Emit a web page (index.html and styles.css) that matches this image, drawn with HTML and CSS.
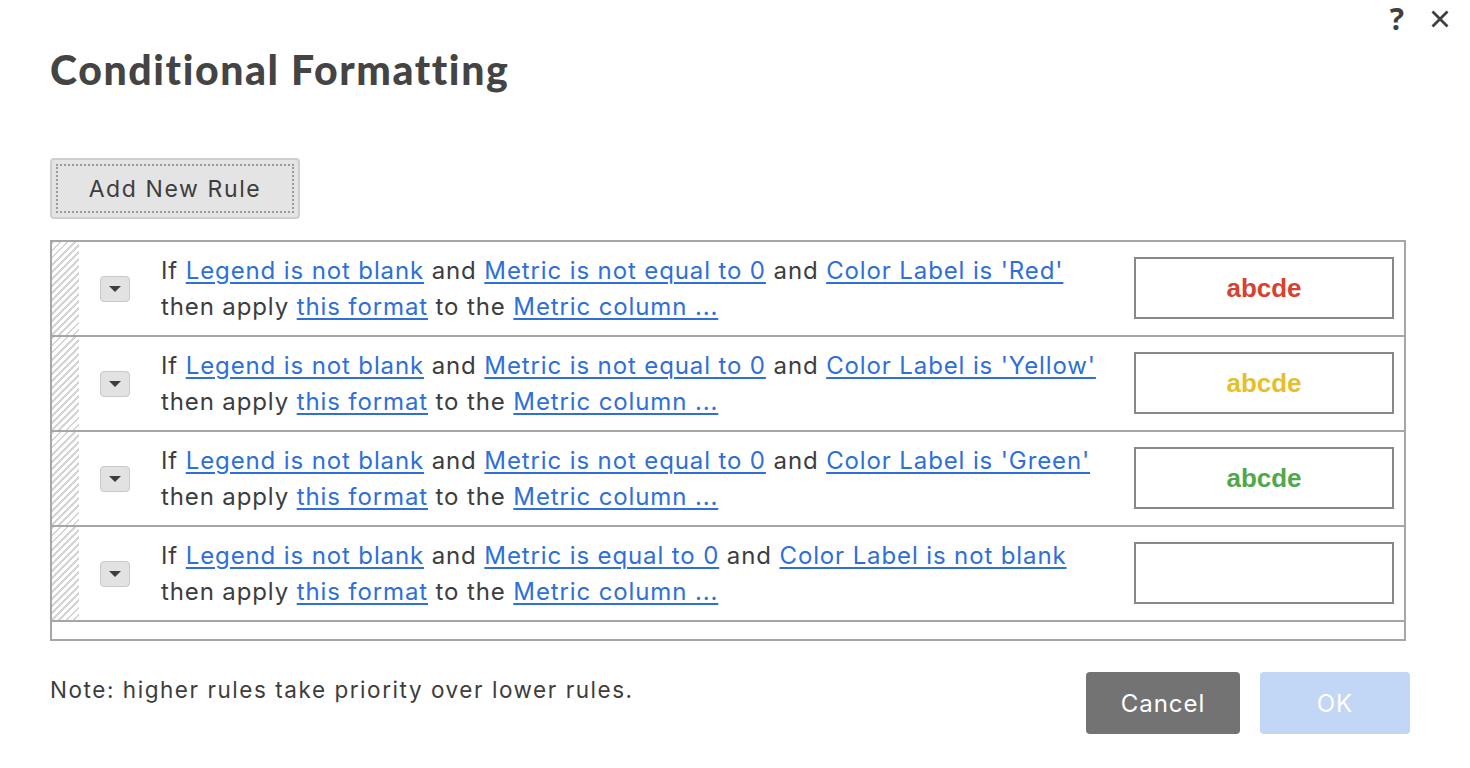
FILE: index.html
```html
<!DOCTYPE html>
<html>
<head>
<meta charset="utf-8">
<link rel="stylesheet" href="styles.css">
</head>
<body>
<div class="dialog">
  <div class="top-icons">
    <span class="help">?</span>
    <svg class="close" width="20" height="20" viewBox="0 0 20 20"><path d="M2.5 2.5 L17.5 17.5 M17.5 2.5 L2.5 17.5" stroke="#3f3f3f" stroke-width="2.8" stroke-linecap="butt"/></svg>
  </div>
  <h1 class="title">Conditional Formatting</h1>
  <button class="add-btn"><span class="focus">Add New Rule</span></button>
  <div class="rules">
    <div class="rule">
      <div class="hatch"></div>
      <div class="drop"><span class="tri"></span></div>
      <div class="desc">
        <div>If <a>Legend is not blank</a> and <a>Metric is not equal to 0</a> and <a>Color Label is 'Red'</a></div>
        <div>then apply <a>this format</a> to the <a>Metric column ...</a></div>
      </div>
      <div class="preview red">abcde</div>
    </div>
    <div class="rule">
      <div class="hatch"></div>
      <div class="drop"><span class="tri"></span></div>
      <div class="desc">
        <div>If <a>Legend is not blank</a> and <a>Metric is not equal to 0</a> and <a>Color Label is 'Yellow'</a></div>
        <div>then apply <a>this format</a> to the <a>Metric column ...</a></div>
      </div>
      <div class="preview yellow">abcde</div>
    </div>
    <div class="rule">
      <div class="hatch"></div>
      <div class="drop"><span class="tri"></span></div>
      <div class="desc">
        <div>If <a>Legend is not blank</a> and <a>Metric is not equal to 0</a> and <a>Color Label is 'Green'</a></div>
        <div>then apply <a>this format</a> to the <a>Metric column ...</a></div>
      </div>
      <div class="preview green">abcde</div>
    </div>
    <div class="rule">
      <div class="hatch"></div>
      <div class="drop"><span class="tri"></span></div>
      <div class="desc">
        <div>If <a>Legend is not blank</a> and <a>Metric is equal to 0</a> and <a>Color Label is not blank</a></div>
        <div>then apply <a>this format</a> to the <a>Metric column ...</a></div>
      </div>
      <div class="preview"></div>
    </div>
    <div class="filler"></div>
  </div>
  <div class="footer">
    <div class="note">Note: higher rules take priority over lower rules.</div>
    <div class="actions">
      <button class="cancel">Cancel</button>
      <button class="ok">OK</button>
    </div>
  </div>
</div>
</body>
</html>
```
FILE: styles.css
```css
html, body {
  margin: 0;
  padding: 0;
  background: #fff;
}
body {
  font-family: Inter, "Noto Sans", sans-serif;
  color: #3d3d3d;
  width: 1470px;
  height: 768px;
  overflow: hidden;
}
.dialog {
  position: relative;
  padding: 0 60px 0 50px;
}
.top-icons {
  position: absolute;
  top: -1px;
  right: 20px;
  display: flex;
  align-items: center;
  gap: 26px;
}
.help {
  font-family: "Open Sans", sans-serif;
  font-weight: 700;
  font-size: 30px;
  color: #3f3f3f;
  line-height: 40px;
}
.close {
  display: block;
}
.title {
  margin: 0;
  padding-top: 45px;
  font-family: Lato, "Open Sans", sans-serif;
  font-weight: 900;
  font-size: 41px;
  line-height: 50px;
  color: #444;
  letter-spacing: 1.6px;
}
.add-btn {
  margin-top: 63px;
  width: 250px;
  height: 61px;
  padding: 4px;
  border: 2px solid #cfcfcf;
  border-radius: 4px;
  background: #e4e4e4;
  font-family: Inter, sans-serif;
  font-size: 23px;
  letter-spacing: 1.6px;
  color: #3d3d3d;
  display: block;
}
.add-btn .focus {
  display: flex;
  align-items: center;
  justify-content: center;
  height: 100%;
  border: 2px dotted #9a9a9a;
  box-sizing: border-box;
}
.rules {
  margin-top: 21px;
  width: 1356px;
  border: 2px solid #a6a6a6;
  box-sizing: border-box;
}
.rule {
  display: flex;
  align-items: stretch;
  height: 95px;
  border-bottom: 2px solid #a6a6a6;
  box-sizing: border-box;
}
.hatch {
  width: 27px;
  flex: none;
  background: repeating-linear-gradient(135deg, #d4d4d4 0 2px, #fff 2px 5px);
}
.drop {
  flex: none;
  align-self: center;
  margin-left: 21px;
  width: 30px;
  height: 26px;
  box-sizing: border-box;
  border: 1px solid #c9c9c9;
  border-radius: 4px;
  background: #e2e2e2;
  display: flex;
  align-items: center;
  justify-content: center;
}
.tri {
  width: 0;
  height: 0;
  border-left: 6px solid transparent;
  border-right: 6px solid transparent;
  border-top: 6px solid #3d3d3d;
  margin-top: 1px;
}
.desc {
  flex: 1;
  margin-left: 31px;
  align-self: center;
  font-size: 24px;
  letter-spacing: 0.88px;
  line-height: 36px;
  white-space: nowrap;
}
.desc a {
  color: #2e6fd9;
  text-decoration: underline;
  text-underline-offset: 3px;
  text-decoration-thickness: 1.5px;
}
.preview {
  flex: none;
  align-self: center;
  margin-right: 10px;
  width: 260px;
  height: 62px;
  box-sizing: border-box;
  border: 2px solid #888;
  display: flex;
  align-items: center;
  justify-content: center;
  font-family: "Liberation Sans", Arial, sans-serif;
  font-weight: 700;
  font-size: 26px;
  margin-top: -1px;
}
.red { color: #d8412f; }
.yellow { color: #e6c02c; }
.green { color: #4fa84c; }
.filler {
  height: 17px;
}
.footer {
  display: flex;
  justify-content: space-between;
  align-items: center;
  margin-top: 31px;
  width: 1360px;
}
.note {
  font-size: 22.5px;
  letter-spacing: 1.55px;
  margin-top: -28px;
}
.actions {
  display: flex;
  gap: 20px;
}
.actions button {
  height: 62px;
  border: none;
  border-radius: 4px;
  font-family: Inter, sans-serif;
  font-size: 24px;
  letter-spacing: 1px;
  color: #fff;
}
.cancel {
  width: 154px;
  background: #737373;
}
.ok {
  width: 150px;
  background: #c2d6f5;
}
```
